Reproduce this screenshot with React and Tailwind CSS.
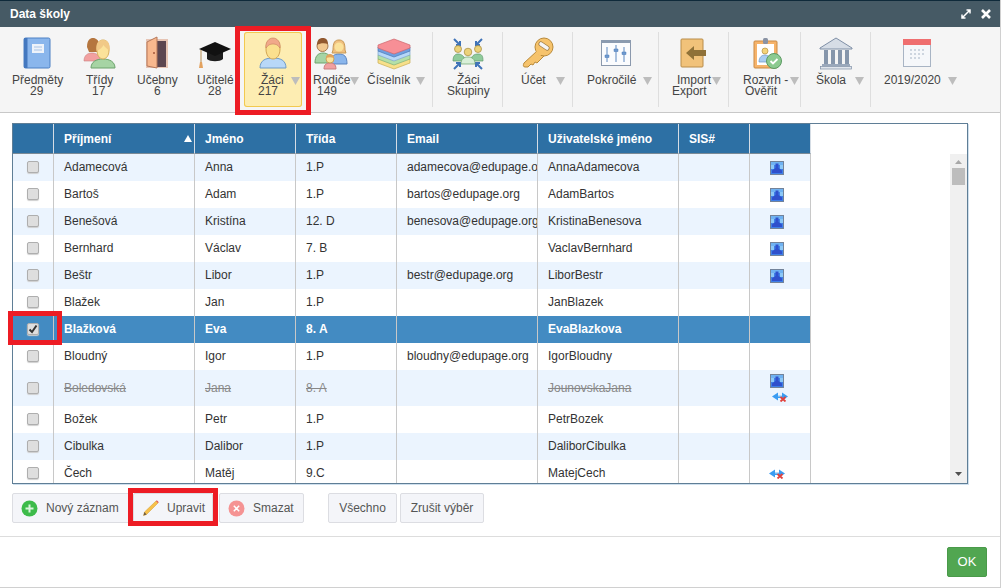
const Arrow = ({ gap }) => (
  <svg width="9" height="8" viewBox="0 0 9 8" className={`shrink-0 ${gap}`}>
    <path d="M0 0H9L4.5 8Z" fill="#bdbdbd" />
  </svg>
);

const BookIcon = () => (
  <>
    <rect x="4" y="2" width="26" height="30" rx="1.5" fill="#8ab6ec" stroke="#4c80c4" />
    <rect x="4" y="2" width="3.5" height="30" fill="#4478bf" />
    <rect x="12" y="8" width="12" height="9" fill="#eef3fa" />
    <path d="M14 11h8M14 14h8" stroke="#a9c4e6" />
  </>
);

const ClassIcon = () => (
  <>
    <path d="M2 25c0-6 4-8 8-8s8 2 8 8Z" fill="#f2a0a0" stroke="#c97f7f" strokeWidth=".6" />
    <path d="M5 11c0-7 3-9 6-9s6 2 6 7l-2 7H7Z" fill="#b5763f" />
    <path d="M9 32c0-6 5-9 12-9s12 3 12 9Z" fill="#a6d4a4" stroke="#6da36d" />
    <path d="M15 14c0-7 2-10 6-10s6 3 6 10c0 6-3 9-6 9s-6-3-6-9Z" fill="#fbe29a" stroke="#d8ae5c" />
    <path d="M14.500 15c-1-8 2-11 6.500-11s7.500 3 6.500 11c-2-2-5-4-6-6-1 2-4 5-7 6Z" fill="#f1c987" />
  </>
);

const DoorIcon = () => (
  <>
    <rect x="6" y="3" width="22" height="29" fill="#e6c4b4" />
    <rect x="17" y="5" width="9" height="26" fill="#5c4650" />
    <path d="M7 6 17 1v31l-10-2Z" fill="#f8b88e" stroke="#b5785a" />
    <circle cx="14" cy="17" r="1" fill="#a5573a" />
  </>
);

const CapIcon = () => (
  <>
    <path d="M9 16v7c3 3 13 3 16 0v-7Z" fill="#1d1d1d" />
    <path d="M1 13 17 6l16 7-16 7Z" fill="#111" />
    <path d="M3 14v12" stroke="#b58c50" />
    <path d="M2 26h2l1 6H1Z" fill="#e3a25f" />
  </>
);

const StudentIcon = () => (
  <>
    <path d="M4 32c0-8 6-10 13-10s13 2 13 10Z" fill="#b8d8f8" stroke="#6f9bc8" />
    <path d="M10 13c0-8 3-10 7-10s7 2 7 10c0 6-3 10-7 10s-7-4-7-10Z" fill="#fbe08e" stroke="#d3a552" />
    <path d="M10 12c-1-6 3-10 7-10s8 4 7 10c-2-3-4-4-7-4s-5 1-7 4Z" fill="#f1a98a" stroke="#c77f5e" strokeWidth=".6" />
  </>
);

const ParentsIcon = () => (
  <>
    <path d="M1 27c0-7 3-10 8-10s8 3 8 10Z" fill="#a6d4a4" stroke="#6da36d" />
    <circle cx="8.500" cy="10" r="5.500" fill="#f2c88f" stroke="#a87b50" />
    <path d="M3 9c0-6 3-7 6-7s5 2 5 6c-3-1-8-1-11 1Z" fill="#91582e" />
    <path d="M17 28c0-8 3-10 8-10s8 2 8 10Z" fill="#8ab6ec" stroke="#5a85c0" />
    <path d="M19 14c0-8 2-10 6-10s6 2 6 10l1 3H18Z" fill="#f0c080" stroke="#c79a55" />
    <circle cx="25" cy="11" r="4.500" fill="#fbe29a" />
    <path d="M10 33c0-5 3-6 6-6s6 1 6 6Z" fill="#f2a0a0" stroke="#c97f7f" />
    <circle cx="16" cy="23" r="4" fill="#fbe29a" stroke="#c9a25a" />
    <path d="M12 22c0-3 2-4 4-4s4 1 4 4c-3-1-5-1-8 0Z" fill="#e0a35c" />
  </>
);

const LayersIcon = () => (
  <>
    <path d="M1 23v4l16 6 16-6v-4Z" fill="#f7e08a" stroke="#c9ad52" strokeWidth=".7" />
    <path d="M1 19v4l16 6 16-6v-4Z" fill="#b4e0a8" stroke="#7eb078" strokeWidth=".7" />
    <path d="M1 15v4l16 6 16-6v-4Z" fill="#b7d8f8" stroke="#7da6cc" strokeWidth=".7" />
    <path d="M1 11v4l16 6 16-6v-4Z" fill="#6f9fe0" stroke="#4a78b8" strokeWidth=".7" />
    <path d="M1 9v3l16 6 16-6V9L17 3Z" fill="#f78f96" stroke="#cd646c" strokeWidth=".7" />
  </>
);

const GroupIcon = () => (
  <>
    <path d="M3 3l6 6M9 5v4H5M31 3l-6 6M25 5v4h4M3 33l6-6M5 27h4v4M31 33l-6-6M29 27h-4v4" stroke="#3f73b8" strokeWidth="2" fill="none" />
    <circle cx="7" cy="13" r="3.500" fill="#ecd27a" stroke="#a48a3c" strokeWidth=".7" />
    <circle cx="27" cy="13" r="3.500" fill="#ecd27a" stroke="#a48a3c" strokeWidth=".7" />
    <path d="M2 25c0-5 2-7 5-7s7 2 7 7ZM20 25c0-5 3-7 7-7s5 2 5 7Z" fill="#8fcb9b" stroke="#5e9a6c" strokeWidth=".7" />
    <circle cx="17" cy="16" r="3.800" fill="#ecd27a" stroke="#a48a3c" strokeWidth=".7" />
    <path d="M10 28c0-5 3-7 7-7s7 2 7 7Z" fill="#d8efd8" stroke="#6da36d" strokeWidth=".7" />
  </>
);

const KeyIcon = () => (
  <>
    <path d="M16 15 3 27c-1 2-1 4 1 4h3l3-3 2 1 2-3 2 1 7-7Z" fill="#f6c36c" stroke="#b98a3a" />
    <circle cx="23" cy="11" r="9" fill="#f6c36c" stroke="#b98a3a" />
    <path d="M15.500 15.500 20 19" stroke="#f6c36c" strokeWidth="3" />
    <path d="M20 8l6 4" stroke="#9a7a45" strokeWidth="5" strokeLinecap="round" />
    <path d="M20 8l6 4" stroke="#f5f5f5" strokeWidth="3.600" strokeLinecap="round" />
  </>
);

const SlidersIcon = () => (
  <>
    <rect x="2.500" y="4.500" width="29" height="25" fill="#fbfcfe" stroke="#8b99ad" />
    <rect x="2" y="4" width="30" height="3" fill="#8b9bb0" />
    <path d="M8 11v15M17 9v17M25 11v15" stroke="#5c88c0" />
    <path d="M6 19h4v2.500H6ZM15 13h4v2.500h-4ZM23 16h4v2.500h-4Z" fill="#6f9ad0" stroke="#4f7db8" strokeWidth=".5" />
  </>
);

const ImportIcon = () => (
  <>
    <rect x="3" y="3" width="22" height="28" rx="1" fill="#f1c27a" stroke="#b98d4a" />
    <path d="M8 17l8-7v4h12v6H16v4Z" fill="#8f7138" />
  </>
);

const ScheduleIcon = () => (
  <>
    <rect x="4" y="5" width="23" height="27" rx="1" fill="#f6b36a" stroke="#c98a45" />
    <rect x="7" y="8" width="17" height="21" fill="#fff" />
    <rect x="13" y="2" width="5" height="6" rx="1.500" fill="#8a93a4" />
    <circle cx="15" cy="15" r="3" fill="#f4d47a" stroke="#b58f3c" strokeWidth=".7" />
    <path d="M9 26c0-5 3-7 6-7s6 2 6 7Z" fill="#a9cdf2" stroke="#6f96c4" strokeWidth=".7" />
    <circle cx="24" cy="25" r="7.500" fill="#8cca90" stroke="#5b9a62" />
    <path d="M20.500 25l2.500 2.500 4.500-4.500" stroke="#fff" strokeWidth="1.800" fill="none" />
  </>
);

const TempleIcon = () => (
  <>
    <path d="M1 12 17 2l16 10v1H1Z" fill="#d6dde6" stroke="#7f8fa6" />
    <path d="M5 14h4v15H5ZM12 14h4v15h-4ZM19 14h4v15h-4ZM26 14h4v15h-4Z" fill="#8696ab" />
    <rect x="3" y="28" width="28" height="2.500" fill="#9aa8bb" />
    <rect x="1.500" y="30.500" width="31" height="2.500" fill="#e0e5ec" stroke="#7f8fa6" strokeWidth=".7" />
  </>
);

const CalendarIcon = () => (
  <>
    <rect x="3.500" y="3.500" width="27" height="27" fill="#f5f7fa" stroke="#a8b4c4" />
    <rect x="3" y="3" width="28" height="6" fill="#ef6f70" />
    <path d="M10 13h2v2h-2ZM14 13h2v2h-2ZM18 13h2v2h-2ZM22 13h2v2h-2ZM10 17h2v2h-2ZM14 17h2v2h-2ZM18 17h2v2h-2ZM22 17h2v2h-2ZM10 21h2v2h-2ZM14 21h2v2h-2ZM18 21h2v2h-2Z" fill="#cdd5df" />
  </>
);

const tools = [
  { icon: BookIcon, box: "w-[62px]", ml: "ml-[12px]", a: "Předměty", pa: "pl-[4px]", b: "29", pb: "pl-[22px]" },
  { icon: ClassIcon, box: "w-[58px]", ml: "ml-[12px]", a: "Třídy", pa: "pl-[16px]", b: "17", pb: "pl-[22px]" },
  { icon: DoorIcon, box: "w-[58px]", ml: "ml-[12px]", a: "Učebny", pa: "pl-[9px]", b: "6", pb: "pl-[26px]" },
  { icon: CapIcon, box: "w-[58px]", ml: "ml-[12px]", a: "Učitelé", pa: "pl-[11px]", b: "28", pb: "pl-[22px]" },
  { icon: StudentIcon, box: "w-[58px] rounded-[3px] bg-[#fdedb2] shadow-[inset_0_0_0_1px_#f2c94f]", ml: "ml-[12px]", a: "Žáci", pa: "pl-[17px]", gap: "ml-[7px]", b: "217", pb: "pl-[14px]" },
  { icon: ParentsIcon, box: "w-[58px]", ml: "ml-[12px]", a: "Rodiče", pa: "pl-[11px]", gap: "ml-0", b: "149", pb: "pl-[15px]" },
  { icon: LayersIcon, box: "w-[73px] border-r border-[#dedede]", ml: "ml-[17px]", a: "Číselník", pa: "pl-[7px]", gap: "ml-[6px]" },
  { icon: GroupIcon, box: "w-[70px] border-r border-[#dedede]", ml: "ml-[18px]", a: "Žáci", pa: "pl-[24px]", b: "Skupiny", pb: "pl-[14px]" },
  { icon: KeyIcon, box: "w-[70px] border-r border-[#dedede]", ml: "ml-[18px]", a: "Účet", pa: "pl-[18px]", gap: "ml-[10px]" },
  { icon: SlidersIcon, box: "w-[86px] border-r border-[#dedede]", ml: "ml-[26px]", a: "Pokročilé", pa: "pl-[14px]", gap: "ml-[7px]" },
  { icon: ImportIcon, box: "w-[70px] border-r border-[#dedede]", ml: "ml-[19px]", a: "Import", pa: "pl-[18px]", gap: "ml-[1px]", b: "Export", pb: "pl-[13px]" },
  { icon: ScheduleIcon, box: "w-[72px] border-r border-[#dedede]", ml: "ml-[21px]", a: "Rozvrh -", pa: "pl-[14px]", gap: "ml-[2px]", b: "Ověřit", pb: "pl-[16px]" },
  { icon: TempleIcon, box: "w-[70px] border-r border-[#dedede]", ml: "ml-[18px]", a: "Škola", pa: "pl-[15px]", gap: "ml-[9px]" },
  { icon: CalendarIcon, box: "w-[89px]", ml: "ml-[29px]", a: "2019/2020", pa: "pl-[13px]", gap: "ml-[7px]" },
];

const ToolItem = ({ tool }) => {
  const Icon = tool.icon;
  return (
    <div className={`shrink-0 h-[75px] pt-[4px] text-[12px] leading-[11px] text-[#444] ${tool.box}`}>
      <svg width="34" height="34" viewBox="0 0 34 34" className={`block ${tool.ml}`}>
        <Icon />
      </svg>
      <div className={`mt-[5px] flex items-center whitespace-nowrap ${tool.pa}`}>
        <span>{tool.a}</span>
        {tool.gap && <Arrow gap={tool.gap} />}
      </div>
      {tool.b && <div className={`whitespace-nowrap ${tool.pb}`}>{tool.b}</div>}
    </div>
  );
};

const rows = [
  ["Adamecová", "Anna", "1.P", "adamecova@edupage.org", "AnnaAdamecova", { person: true }],
  ["Bartoš", "Adam", "1.P", "bartos@edupage.org", "AdamBartos", { person: true }],
  ["Benešová", "Kristína", "12. D", "benesova@edupage.org", "KristinaBenesova", { person: true }],
  ["Bernhard", "Václav", "7. B", "", "VaclavBernhard", { person: true }],
  ["Beštr", "Libor", "1.P", "bestr@edupage.org", "LiborBestr", { person: true }],
  ["Blažek", "Jan", "1.P", "", "JanBlazek", {}],
  ["Blažková", "Eva", "8. A", "", "EvaBlazkova", { selected: true }],
  ["Bloudný", "Igor", "1.P", "bloudny@edupage.org", "IgorBloudny", {}],
  ["Boledovská", "Jana", "8. A", "", "JounovskaJana", { person: true, unlinked: true, struck: true }],
  ["Božek", "Petr", "1.P", "", "PetrBozek", {}],
  ["Cibulka", "Dalibor", "1.P", "", "DaliborCibulka", {}],
  ["Čech", "Matěj", "9.C", "", "MatejCech", { unlinked: true }],
];

const headers = ["", "Příjmení", "Jméno", "Třída", "Email", "Uživatelské jméno", "SIS#", ""];

const PersonIcon = () => (
  <svg width="14" height="14" viewBox="0 0 14 14" className="block">
    <rect width="14" height="14" fill="#73839a" />
    <rect x="1" y="1" width="12" height="12" fill="#3f7fe8" />
    <rect x="1" y="1" width="12" height="3" fill="#6fb2f2" />
    <rect x="1" y="4" width="3" height="4" fill="#8cc8f7" />
    <rect x="10" y="4" width="3" height="4" fill="#8cc8f7" />
    <path d="M5.500 2.500h3V7l3.500 2.500V12H2V9.500L5.500 7Z" fill="#2f50cc" />
  </svg>
);

const UnlinkIcon = ({ shift }) => (
  <svg width="16" height="10" viewBox="0 0 16 10" className={`block ${shift}`}>
    <path d="M0 4.500 6 .5v2.500h4V.5l6 4-6 4V6H6v2.500Z" fill="#3a9cf2" />
    <path d="M6 3h4v1.500H6Z" fill="#b9dcf8" />
    <path d="M8.500 5l5 4.500M13.500 5l-5 4.500" stroke="#e2413c" strokeWidth="1.800" />
  </svg>
);

const Checkbox = ({ checked }) => (
  <div className="flex h-[12px] w-[12px] items-center justify-center rounded-[2px] border border-[#aeaeae] bg-[#dedede] shadow-[0_1px_1px_#cfcfcf]">
    {checked && (
      <svg width="10" height="10" viewBox="0 0 10 10">
        <path d="M1.500 5.500l2.500 2.500L8.500 1.500" stroke="#333" strokeWidth="2" fill="none" />
      </svg>
    )}
  </div>
);

const Row = ({ row, index }) => {
  const flags = row[5];
  const bg = flags.selected ? "bg-[#438bc2]" : index % 2 === 0 ? "bg-[#ebf4fe]" : "bg-white";
  const height = flags.struck ? "h-[36px]" : "h-[27px]";
  const text = flags.selected ? "font-bold text-white" : flags.struck ? "text-[#888] line-through" : "text-[#333]";
  return (
    <tr className={`${bg} ${height} ${text}`}>
      <td className="border-r border-[#c8c8c8] p-0">
        <div className="flex justify-center pb-[1px] pr-[1px]">
          <Checkbox checked={flags.selected} />
        </div>
      </td>
      {row.slice(0, 5).map((cell, i) => (
        <td key={i} className="overflow-hidden whitespace-nowrap border-r border-[#c8c8c8] pb-[1px] pl-[10px] pr-0 pt-0">
          {cell}
        </td>
      ))}
      <td className="border-r border-[#c8c8c8] p-0"></td>
      <td className="border-r border-[#c8c8c8] p-0">
        <div className="flex flex-col items-center gap-[4px] pr-[6px]">
          {flags.person && <PersonIcon />}
          {flags.unlinked && <UnlinkIcon shift={flags.person ? "ml-[5px]" : ""} />}
        </div>
      </td>
    </tr>
  );
};

const Btn = ({ children, className = "" }) => (
  <button className={`flex h-[30px] items-center rounded-[2px] border border-[#dcdde2] bg-[#f4f5f9] text-[12px] text-[#555] ${className}`}>
    {children}
  </button>
);

export default function App() {
  return (
    <div className="relative h-[588px] w-[1002px] overflow-hidden bg-white font-['Liberation_Sans',Arial,sans-serif]">
      <div className="h-[588px] w-[1001px] border-r border-b border-[#d0d0d0]">
        {/* title */}
        <div className="flex h-[27px] items-center justify-between border-t border-[#0f2a3a] bg-[#465a65] pl-[10px] pr-[9px]">
          <span className="text-[12px] font-bold text-white">Data školy</span>
          <div className="flex items-center gap-[10px]">
            <svg width="10" height="10" viewBox="0 0 10 10">
              <path d="M1 9 9 1M5.500 1H9v3.500M1 5.500V9h3.500" stroke="#fff" strokeWidth="1.500" fill="none" />
            </svg>
            <svg width="10" height="10" viewBox="0 0 10 10">
              <path d="M1 1l8 8M9 1l-8 8" stroke="#fff" strokeWidth="2.600" />
            </svg>
          </div>
        </div>

        {/* toolbar */}
        <div className="flex h-[86px] border-b border-[#c8c8c8] bg-[#f5f5f5] pl-[8px] pt-[5px]">
          {tools.map((tool) => (
            <ToolItem key={tool.a + tool.pa} tool={tool} />
          ))}
        </div>

        {/* table */}
        <div className="ml-[12px] mt-[10px] flex h-[361px] w-[956px] overflow-hidden border border-[#5f7e96] shadow-[1px_1px_0_#cfe0ee]">
          <table className="w-[798px] table-fixed border-separate border-spacing-0 self-start text-[12px]">
            <colgroup>
              <col className="w-[41px]" />
              <col className="w-[141px]" />
              <col className="w-[101px]" />
              <col className="w-[101px]" />
              <col className="w-[141px]" />
              <col className="w-[141px]" />
              <col className="w-[71px]" />
              <col className="w-[61px]" />
            </colgroup>
            <thead>
              <tr className="h-[30px] bg-[#2d70a4] text-white">
                {headers.map((h, i) => (
                  <th key={i} className="border-r border-b border-r-[#d5dde5] border-b-[#7b8a96] py-0 pl-[10px] pr-0 text-left font-bold">
                    <div className="flex items-center justify-between pr-[2px]">
                      <span>{h}</span>
                      {i === 1 && (
                        <svg width="8" height="7" viewBox="0 0 8 7">
                          <path d="M4 0l4 7H0Z" fill="#fff" />
                        </svg>
                      )}
                    </div>
                  </th>
                ))}
              </tr>
            </thead>
            <tbody>
              {rows.map((row, i) => (
                <Row key={row[0]} row={row} index={i} />
              ))}
            </tbody>
          </table>
          <div className="flex-1" />
          <div className="mt-[30px] flex w-[17px] flex-col items-center bg-[#f0f0f0] pt-[6px]">
            <svg width="7" height="4" viewBox="0 0 7 4" className="mb-[4px] ml-[-1px]">
              <path d="M3.500 0 7 4H0Z" fill="#a8a8a8" />
            </svg>
            <div className="h-[17px] w-[13px] bg-[#bdbdbd]" />
            <svg width="7" height="4" viewBox="0 0 7 4" className="ml-[-1px] mt-auto mb-[7px]">
              <path d="M0 0H7L3.500 4Z" fill="#505050" />
            </svg>
          </div>
        </div>

        {/* buttons */}
        <div className="ml-[12px] mt-[9px] flex h-[30px]">
          <Btn className="w-[119px] pl-[8px]">
            <svg width="17" height="17" viewBox="0 0 17 17" className="mr-[8px]">
              <circle cx="8.500" cy="8.500" r="8" fill="#3dbb4a" />
              <path d="M8.500 4.500v8M4.500 8.500h8" stroke="#d9f5dc" strokeWidth="2" />
            </svg>
            Nový záznam
          </Btn>
          <Btn className="ml-[2px] w-[80px] pl-[8px]">
            <svg width="18" height="18" viewBox="0 0 18 18" className="mr-[7px]">
              <path d="M1.500 16.500l1-3.500L14 2l2 2L4.500 15.500Z" fill="#f7c04a" stroke="#d19a2a" strokeWidth=".5" />
              <path d="M14 2l.8-.8 2 2L16 4Z" fill="#e8504a" />
              <path d="M1.500 16.500l1-3.500 2 2.500Z" fill="#6b5a45" />
            </svg>
            Upravit
          </Btn>
          <Btn className="ml-[6px] w-[85px] pl-[8px]">
            <svg width="17" height="17" viewBox="0 0 17 17" className="mr-[8px]">
              <circle cx="8.500" cy="8.500" r="8" fill="#f59393" />
              <path d="M5.800 5.800l5.400 5.400M11.200 5.800l-5.400 5.400" stroke="#fff" strokeWidth="1.500" />
            </svg>
            Smazat
          </Btn>
          <Btn className="ml-[24px] w-[69px] justify-center">Všechno</Btn>
          <Btn className="ml-[3px] w-[84px] justify-center">Zrušit výběr</Btn>
        </div>

        {/* footer */}
        <div className="mt-[13px] flex justify-end border-t border-[#dddddd] pr-[13px] pt-[10px]">
          <button className="h-[30px] w-[40px] rounded-[2px] border border-[#4a9a4a] bg-[#51a651] text-[13px] text-white">
            OK
          </button>
        </div>
      </div>

      {/* red markers over the screenshot */}
      <div className="absolute left-[235px] top-[26px] h-[89px] w-[76px] border-[5px] border-[#ed1c24]" />
      <div className="absolute left-[8px] top-[311px] h-[34px] w-[54px] border-[5px] border-[#ed1c24]" />
      <div className="absolute left-[128px] top-[488px] h-[38px] w-[90px] border-[5px] border-[#ed1c24]" />
    </div>
  );
}
